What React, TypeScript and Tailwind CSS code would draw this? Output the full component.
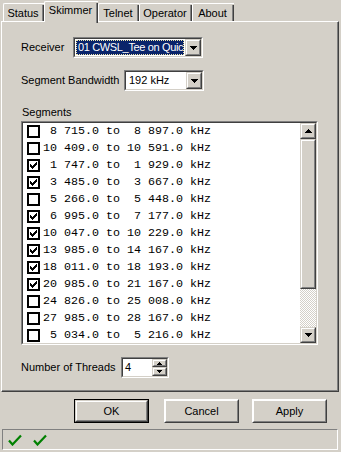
import React from "react";

const segs: [number, number, boolean][] = [
  [8715, 8897, false],
  [10409, 10591, false],
  [1747, 1929, true],
  [3485, 3667, true],
  [5266, 5448, false],
  [6995, 7177, true],
  [10047, 10229, true],
  [13985, 14167, true],
  [18011, 18193, true],
  [20985, 21167, true],
  [24826, 25008, false],
  [27985, 28167, false],
  [5034, 5216, false],
];

function fmt(k: number) {
  const m = Math.floor(k / 1000);
  const r = k % 1000;
  return `${String(m).padStart(2, " ")} ${String(r).padStart(3, "0")}.0`;
}

function Raised({ className = "", children }: { className?: string; children?: React.ReactNode }) {
  return (
    <div className={`shrink-0 border border-t-[#d4d0c8] border-l-[#d4d0c8] border-r-[#404040] border-b-[#404040] bg-[#d4d0c8] ${className}`}>
      <div className="w-full h-full border border-t-white border-l-white border-r-[#808080] border-b-[#808080] flex items-center justify-center">
        {children}
      </div>
    </div>
  );
}

function Sunken({ className = "", children }: { className?: string; children?: React.ReactNode }) {
  return (
    <div className={`shrink-0 border border-t-[#808080] border-l-[#808080] border-r-white border-b-white ${className}`}>
      <div className="w-full h-full border border-t-[#404040] border-l-[#404040] border-r-[#d4d0c8] border-b-[#d4d0c8] bg-white flex overflow-hidden">
        {children}
      </div>
    </div>
  );
}

function Down() {
  return (
    <svg width="7" height="4" viewBox="0 0 7 4" shapeRendering="crispEdges">
      <path d="M0 0h7v1H0zM1 1h5v1H1zM2 2h3v1H2zM3 3h1v1H3z" fill="#000" />
    </svg>
  );
}
function Up() {
  return (
    <svg width="7" height="4" viewBox="0 0 7 4" shapeRendering="crispEdges">
      <path d="M3 0h1v1H3zM2 1h3v1H2zM1 2h5v1H1zM0 3h7v1H0z" fill="#000" />
    </svg>
  );
}
function SmallUp() {
  return (
    <svg width="5" height="3" viewBox="0 0 5 3" shapeRendering="crispEdges">
      <path d="M2 0h1v1H2zM1 1h3v1H1zM0 2h5v1H0z" fill="#000" />
    </svg>
  );
}
function SmallDown() {
  return (
    <svg width="5" height="3" viewBox="0 0 5 3" shapeRendering="crispEdges">
      <path d="M0 0h5v1H0zM1 1h3v1H1zM2 2h1v1H2z" fill="#000" />
    </svg>
  );
}

function Check() {
  return (
    <svg width="7" height="7" viewBox="0 0 7 7" shapeRendering="crispEdges">
      <path d="M6 0h1v3H6zM5 1h1v3H5zM4 2h1v3H4zM3 3h1v3H3zM2 4h1v3H2zM1 3h1v3H1zM0 2h1v3H0z" fill="#000" />
    </svg>
  );
}

function GreenCheck() {
  return (
    <svg width="14" height="12" viewBox="0 0 14 12">
      <path d="M1 6.5 L4.5 10.5 L13 1.5" fill="none" stroke="#008000" strokeWidth="2.2" strokeLinejoin="miter" />
    </svg>
  );
}

function Tab({ label, w, selected }: { label: string; w: string; selected?: boolean }) {
  if (selected) {
    return (
      <div className={`${w} h-[21px] -mb-[1px] relative z-10 bg-[#d4d0c8] border-l border-t border-white rounded-tl-[2px] flex`}>
        <div className="flex-1 flex justify-center pt-[2px] leading-[13px]">{label}</div>
        <div className="w-[2px] h-full border-r border-r-[#404040] border-l border-l-[#808080] mt-[1px]" />
      </div>
    );
  }
  return (
    <div className={`${w} h-[18px] bg-[#d4d0c8] border-l border-t border-white rounded-tl-[2px] flex`}>
      <div className="flex-1 flex justify-center pt-[3px] leading-[13px]">{label}</div>
      <div className="w-[2px] h-full border-r border-r-[#404040] border-l border-l-[#808080] mt-[1px]" />
    </div>
  );
}

export default function App() {
  return (
    <div className="w-[341px] h-[452px] bg-[#d4d0c8] overflow-hidden font-['Liberation_Sans',Arial,sans-serif] text-[11px] text-black flex flex-col">
      {/* tabs */}
      <div className="h-[21px] flex items-end pl-[3px]">
        <Tab label="Status" w="w-[41px]" />
        <Tab label="Skimmer" w="w-[54px]" selected />
        <Tab label="Telnet" w="w-[41px]" />
        <Tab label="Operator" w="w-[53px]" />
        <Tab label="About" w="w-[42px]" />
      </div>

      {/* panel */}
      <div className="ml-[1px] w-[338px] h-[371px] border-t border-l border-white border-r border-b border-r-[#404040] border-b-[#404040]">
        <div className="w-full h-full border-r border-b border-r-[#808080] border-b-[#808080] pl-[19px] pt-[15px] flex flex-col">
          {/* Receiver */}
          <div className="flex items-center h-[21px]">
            <div className="w-[52px] leading-[13px]">Receiver</div>
            <Sunken className="w-[130px] h-[21px]">
              <div className="flex-1 min-w-0 p-[1px] bg-white flex">
                <div className="flex-1 min-w-0 bg-[#0a246a] border border-dotted border-[#f0e6a8] text-white whitespace-nowrap overflow-hidden leading-[13px] pl-[1px] tracking-[-0.35px]">
                  01 CWSL_Tee on Quic
                </div>
              </div>
              <Raised className="w-[16px] h-full">
                <Down />
              </Raised>
            </Sunken>
          </div>

          {/* Segment Bandwidth */}
          <div className="flex items-center h-[21px] mt-[12px]">
            <div className="w-[103px] leading-[13px]">Segment Bandwidth</div>
            <Sunken className="w-[80px] h-[21px]">
              <div className="flex-1 min-w-0 pl-[3px] flex items-center leading-[13px]">192 kHz</div>
              <Raised className="w-[16px] h-full">
                <Down />
              </Raised>
            </Sunken>
          </div>

          {/* Segments */}
          <div className="mt-[15px] h-[13px] leading-[13px] pl-[1px]">Segments</div>
          <Sunken className="mt-[2px] w-[297px] h-[224px]">
            <div className="flex-1 min-w-0 flex flex-col overflow-hidden font-['Liberation_Mono','Courier_New',monospace] text-[11.67px]">
              {segs.map(([a, b, c], i) => (
                <div key={i} className="h-[17px] shrink-0 flex items-center pl-[4px]">
                  <div className="w-[13px] h-[13px] border-2 border-black bg-white flex items-center justify-center shrink-0">
                    {c && <Check />}
                  </div>
                  <div className="ml-[3px] whitespace-pre leading-[17px]">{`${fmt(a)} to ${fmt(b)} kHz`}</div>
                </div>
              ))}
            </div>
            <div className="w-[16px] h-full flex flex-col shrink-0">
              <Raised className="w-[16px] h-[16px]">
                <Up />
              </Raised>
              <Raised className="w-[16px] h-[150px]" />
              <div className="flex-1 bg-[repeating-conic-gradient(#d4d0c8_0_25%,#ffffff_0_50%)] bg-[length:2px_2px]" />
              <Raised className="w-[16px] h-[16px]">
                <Down />
              </Raised>
            </div>
          </Sunken>

          {/* Threads */}
          <div className="flex items-center h-[21px] mt-[12px]">
            <div className="w-[100px] leading-[13px]">Number of Threads</div>
            <Sunken className="w-[48px] h-[21px]">
              <div className="flex-1 min-w-0 pl-[2px] flex items-center leading-[13px]">4</div>
              <div className="w-[15px] h-full flex flex-col shrink-0">
                <Raised className="w-[15px] h-[8px]">
                  <SmallUp />
                </Raised>
                <Raised className="w-[15px] h-[9px]">
                  <SmallDown />
                </Raised>
              </div>
            </Sunken>
          </div>
        </div>
      </div>

      {/* buttons */}
      <div className="mt-[7px] flex h-[24px]">
        <div className="ml-[74px] w-[75px] h-[24px] border border-black">
          <Raised className="w-full h-full">
            <span className="leading-[13px]">OK</span>
          </Raised>
        </div>
        <Raised className="ml-[15px] w-[75px] h-[24px] !border-t-white !border-l-white">
          <span className="leading-[13px]">Cancel</span>
        </Raised>
        <Raised className="ml-[13px] w-[75px] h-[24px] !border-t-white !border-l-white">
          <span className="leading-[13px]">Apply</span>
        </Raised>
      </div>

      {/* status bar */}
      <div className="mt-[6px] ml-[2px] w-[336px] h-[21px] border border-t-[#808080] border-l-[#808080] border-r-white border-b-white flex items-center pl-[5px] gap-[11px]">
        <GreenCheck />
        <GreenCheck />
      </div>
    </div>
  );
}
